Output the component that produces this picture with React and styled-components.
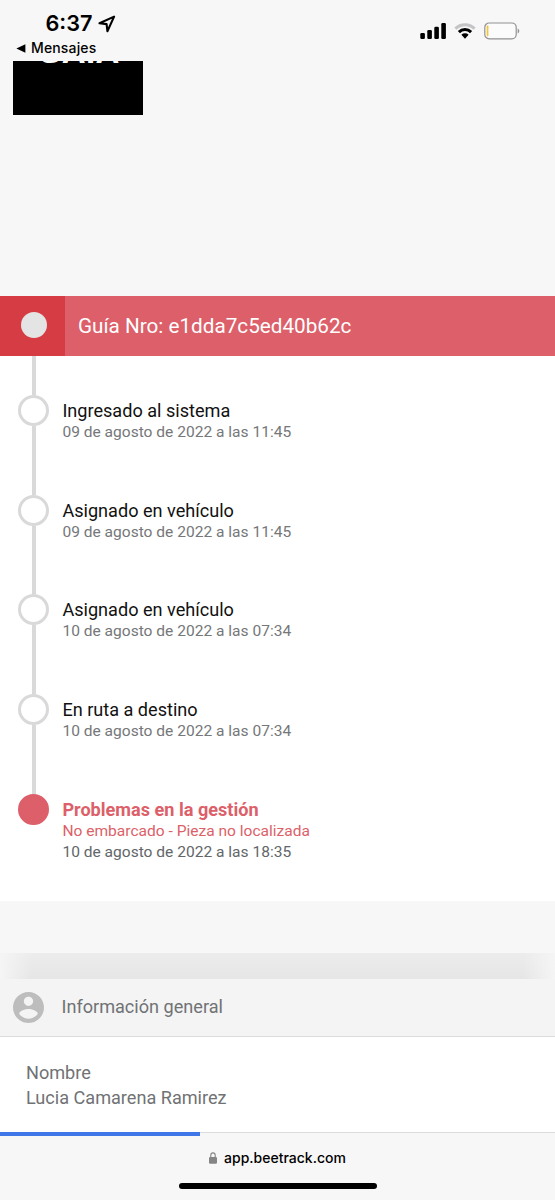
import React from "react";
import styled, { createGlobalStyle } from "styled-components";

const steps = [
  { title: "Ingresado al sistema", date: "09 de agosto de 2022 a las 11:45" },
  { title: "Asignado en vehículo", date: "09 de agosto de 2022 a las 11:45" },
  { title: "Asignado en vehículo", date: "10 de agosto de 2022 a las 07:34" },
  { title: "En ruta a destino", date: "10 de agosto de 2022 a las 07:34" },
  {
    title: "Problemas en la gestión",
    detail: "No embarcado - Pieza no localizada",
    date: "10 de agosto de 2022 a las 18:35",
    failed: true,
  },
];

export default function App() {
  return (
    <Screen>
      <GlobalStyle />
      <StatusBar />
      <Brand>
        <Logo>
          <LogoText>SAIA</LogoText>
        </Logo>
      </Brand>

      <GuideHeader>
        <GuideMark>
          <GuideDot />
        </GuideMark>
        <GuideTitle>Guía Nro: e1dda7c5ed40b62c</GuideTitle>
      </GuideHeader>
      <Timeline>
        <FirstLine />
        {steps.map((step, index) => (
          <Step key={index}>
            <Rail>
              <Dot $failed={step.failed} />
              {index < steps.length - 1 && <Line />}
            </Rail>
            <div>
              <StepTitle $failed={step.failed}>{step.title}</StepTitle>
              {step.detail && <StepDetail>{step.detail}</StepDetail>}
              <StepDate $dark={step.failed}>{step.date}</StepDate>
            </div>
          </Step>
        ))}
      </Timeline>

      <Gap />
      <ShadowBand />
      <InfoHeader>
        <UserIcon />
        <InfoTitle>Información general</InfoTitle>
      </InfoHeader>
      <InfoBody>
        <InfoLine>Nombre</InfoLine>
        <InfoLine>Lucia Camarena Ramirez</InfoLine>
      </InfoBody>

      <BrowserBar>
        <Progress />
        <Address>
          <LockIcon />
          <AddressText>app.beetrack.com</AddressText>
        </Address>
        <HomeIndicator />
      </BrowserBar>
    </Screen>
  );
}

function StatusBar() {
  return (
    <Status>
      <StatusLeft>
        <ClockRow>
          <Clock>6:37</Clock>
          <svg width="18" height="18" viewBox="0 0 18 18">
            <path
              d="M16.1 1.6 L1.5 8.2 L8.6 9.1 L9.4 16.2 Z"
              fill="none"
              stroke="#000"
              strokeWidth="2.1"
              strokeLinejoin="round"
            />
          </svg>
        </ClockRow>
        <BackRow>
          <svg width="10" height="9" viewBox="0 0 10 9">
            <path d="M0.4 4.5 L9.4 0.2 V8.8 Z" />
          </svg>
          <BackText>Mensajes</BackText>
        </BackRow>
      </StatusLeft>
      <StatusIcons>
        <svg width="26" height="18" viewBox="0 0 26 18">
          <rect x="0.3" y="11" width="4.6" height="6.1" rx="1.3" />
          <rect x="7.3" y="8" width="4.6" height="9.1" rx="1.3" />
          <rect x="14.3" y="4.7" width="4.6" height="12.4" rx="1.3" />
          <rect x="21.3" y="1" width="4.6" height="16.1" rx="1.3" />
        </svg>
        <svg width="22" height="18" viewBox="0 0 22 18">
          <g fill="none" strokeWidth="3">
            <path d="M1.4 6.6 A13.6 13.6 0 0 1 20.6 6.6" stroke="#c4c4c6" />
            <path d="M4.9 10.1 A8.6 8.6 0 0 1 17.1 10.1" stroke="#000" />
          </g>
          <path d="M7.4 12.7 A5.1 5.1 0 0 1 14.6 12.7 L11 16.7 Z" />
        </svg>
        <svg width="36" height="18" viewBox="0 0 36 18">
          <rect x="0.8" y="1" width="31.4" height="15.8" rx="4.4" fill="#fbfbfb" stroke="#929294" strokeWidth="1.2" />
          <rect x="2.7" y="3.6" width="1.7" height="10.6" rx="0.6" fill="#f2c63c" />
          <path d="M33.7 6.4 C35.8 7.2 35.8 10.6 33.7 11.4 Z" fill="#929294" />
        </svg>
      </StatusIcons>
    </Status>
  );
}

function UserIcon() {
  return (
    <svg width="31" height="31" viewBox="2 2 20 20">
      <path
        fill="#bdbdbd"
        d="M12 2C6.48 2 2 6.48 2 12s4.48 10 10 10 10-4.48 10-10S17.52 2 12 2zm0 3c1.66 0 3 1.34 3 3s-1.34 3-3 3-3-1.34-3-3 1.34-3 3-3zm0 14.2c-2.5 0-4.71-1.28-6-3.22.03-1.99 4-3.08 6-3.08 1.99 0 5.97 1.09 6 3.08-1.29 1.94-3.5 3.22-6 3.22z"
      />
    </svg>
  );
}

function LockIcon() {
  return (
    <svg width="8" height="12" viewBox="0 0 8 12">
      <rect x="0" y="5" width="8" height="6.8" rx="1.2" fill="#858587" />
      <path d="M1.8 5.5 V3.3 a2.2 2.4 0 0 1 4.4 0 V5.5" fill="none" stroke="#858587" strokeWidth="1.1" />
    </svg>
  );
}

const GlobalStyle = createGlobalStyle`
  * {
    box-sizing: border-box;
  }
  body {
    margin: 0;
    background: #f7f7f7;
    font-family: Roboto, "Liberation Sans", sans-serif;
  }
  p, h1, h2 {
    margin: 0;
    font-weight: 400;
    white-space: nowrap;
  }
  svg {
    display: block;
    flex: none;
  }
`;

const Screen = styled.div`
  display: flex;
  flex-direction: column;
  width: 555px;
  height: 1200px;
  overflow: hidden;
  background: #f7f7f7;
`;

const Status = styled.header`
  display: flex;
  justify-content: space-between;
  flex: none;
  height: 61px;
  padding: 0 35px 0 16px;
  font-family: Inter, "Liberation Sans", sans-serif;
`;

const StatusLeft = styled.div`
  padding-top: 10px;
`;

const ClockRow = styled.div`
  display: flex;
  align-items: center;
  gap: 5px;
  height: 27px;
  padding-left: 29.5px;
`;

const Clock = styled.p`
  width: 47px;
  font-size: 21.7px;
  font-weight: 600;
  line-height: 27px;
`;

const BackRow = styled.div`
  display: flex;
  align-items: center;
  gap: 5px;
  height: 22px;
`;

const BackText = styled.p`
  font-size: 14px;
  font-weight: 500;
  line-height: 22px;
  letter-spacing: 0.15px;
`;

const StatusIcons = styled.div`
  display: flex;
  gap: 8px;
  padding-top: 22px;
`;

const Brand = styled.div`
  flex: none;
  height: 235px;
  padding-left: 13px;
`;

const Logo = styled.div`
  display: flex;
  justify-content: center;
  width: 130px;
  height: 54px;
  overflow: hidden;
  background: #000;
`;

const LogoText = styled.p`
  height: 30px;
  margin-top: -24px;
  padding-left: 3px;
  color: #fff;
  font-family: "Liberation Sans", sans-serif;
  font-size: 33px;
  font-weight: 700;
  line-height: 30px;
  letter-spacing: 0.4px;
`;

const GuideHeader = styled.div`
  display: flex;
  flex: none;
  height: 60px;
  background: #dc5f69;
`;

const GuideMark = styled.div`
  display: flex;
  align-items: center;
  width: 65px;
  padding: 0 0 3px 21px;
  background: #d63c43;
`;

const GuideDot = styled.span`
  width: 26px;
  height: 26px;
  border-radius: 50%;
  background: #e4e4e4;
`;

const GuideTitle = styled.h1`
  padding-left: 13px;
  color: #fff;
  font-size: 20.7px;
  line-height: 60px;
`;

const Timeline = styled.section`
  flex: none;
  height: 545px;
  background: #fff;
`;

const FirstLine = styled.div`
  width: 4px;
  height: 39px;
  margin-left: 32px;
  background: #d9d9d9;
`;

const Step = styled.div`
  display: flex;
  gap: 13.4px;
  height: 99.7px;
`;

const Rail = styled.div`
  display: flex;
  flex-direction: column;
  width: 49px;
  padding-left: 18px;
`;

const Dot = styled.span`
  flex: none;
  width: 31px;
  height: 31px;
  border: 3px solid ${({ $failed }) => ($failed ? "#dc5f69" : "#d9d9d9")};
  border-radius: 50%;
  background: ${({ $failed }) => ($failed ? "#dc5f69" : "#fff")};
`;

const Line = styled.span`
  flex: 1;
  width: 4px;
  margin-left: 14px;
  background: #d9d9d9;
`;

const StepTitle = styled.h2`
  padding-top: 5px;
  color: ${({ $failed }) => ($failed ? "#dc5f69" : "#111")};
  font-size: 18.1px;
  font-weight: ${({ $failed }) => ($failed ? 700 : 400)};
  line-height: 22px;
`;

const StepDetail = styled.p`
  color: #dc5f69;
  font-size: 15.55px;
  line-height: 21px;
`;

const StepDate = styled.p`
  color: ${({ $dark }) => ($dark ? "#626668" : "#757779")};
  font-size: 15.55px;
  line-height: 21px;
`;

const Gap = styled.div`
  flex: none;
  height: 52px;
`;

const ShadowBand = styled.div`
  flex: none;
  height: 26px;
  background: linear-gradient(90deg, #f5f5f5, rgba(245, 245, 245, 0) 32px calc(100% - 32px), #f5f5f5),
    linear-gradient(#ececec, #e6e6e6);
`;

const InfoHeader = styled.div`
  display: flex;
  align-items: center;
  gap: 17.5px;
  flex: none;
  height: 58px;
  padding-left: 13px;
  border-bottom: 1px solid #dcdcdc;
  background: #f4f4f4;
`;

const InfoTitle = styled.h2`
  padding-bottom: 2px;
  color: #707274;
  font-size: 18.1px;
  line-height: 24px;
`;

const InfoBody = styled.div`
  flex: none;
  height: 95px;
  padding: 23px 26px 0;
  background: #fff;
`;

const InfoLine = styled.p`
  color: #707274;
  font-size: 18.1px;
  line-height: 25px;
`;

const BrowserBar = styled.footer`
  display: flex;
  flex-direction: column;
  align-items: center;
  flex: 1;
  border-top: 1px solid #dcdcdc;
`;

const Progress = styled.div`
  align-self: flex-start;
  width: 200px;
  height: 4px;
  margin-top: -1px;
  background: #3f76e8;
`;

const Address = styled.div`
  display: flex;
  align-items: center;
  gap: 7px;
  height: 20px;
  margin-top: 12px;
  font-family: Inter, "Liberation Sans", sans-serif;
`;

const AddressText = styled.p`
  font-size: 14px;
  font-weight: 500;
  line-height: 20px;
`;

const HomeIndicator = styled.div`
  width: 198px;
  height: 6px;
  margin-top: 15px;
  border-radius: 3px;
  background: #000;
`;
